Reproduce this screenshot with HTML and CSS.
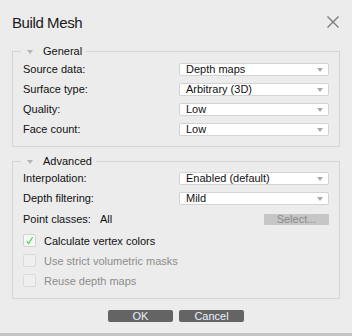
FILE: index.html
```html
<!DOCTYPE html>
<html lang="en">
<head>
    <meta charset="UTF-8">
    <title>Build Mesh</title>
    <link rel="stylesheet" href="styles.css">
</head>
<body>
<div class="dialog">
    <div class="header">
        <span class="title">Build Mesh</span>
        <svg class="close" width="12" height="12" viewBox="0 0 12 12">
            <path d="M0.5 0.5 L11.5 11.5 M11.5 0.5 L0.5 11.5" stroke="#7c7c7c" stroke-width="1.4" fill="none"/>
        </svg>
    </div>

    <fieldset class="group">
        <legend><span class="caret"></span>General</legend>
        <div class="row">
            <span class="label">Source data:</span>
            <div class="combo">Depth maps<span class="arrow"></span></div>
        </div>
        <div class="row">
            <span class="label">Surface type:</span>
            <div class="combo">Arbitrary (3D)<span class="arrow"></span></div>
        </div>
        <div class="row">
            <span class="label">Quality:</span>
            <div class="combo">Low<span class="arrow"></span></div>
        </div>
        <div class="row">
            <span class="label">Face count:</span>
            <div class="combo">Low<span class="arrow"></span></div>
        </div>
    </fieldset>

    <fieldset class="group advanced">
        <legend><span class="caret"></span>Advanced</legend>
        <div class="row">
            <span class="label">Interpolation:</span>
            <div class="combo">Enabled (default)<span class="arrow"></span></div>
        </div>
        <div class="row">
            <span class="label">Depth filtering:</span>
            <div class="combo">Mild<span class="arrow"></span></div>
        </div>
        <div class="row point-row">
            <span class="label">Point classes:<span class="value">All</span></span>
            <div class="select-btn">Select...</div>
        </div>
        <div class="row check-row">
            <span class="checkbox">
                <svg width="11" height="11" viewBox="0 0 11 11">
                    <path d="M2.8 6.2 L4.6 8.6 L8.6 2.2" stroke="#5bd46c" stroke-width="1.3" fill="none"/>
                </svg>
            </span>
            <span class="check-label">Calculate vertex colors</span>
        </div>
        <div class="row check-row disabled">
            <span class="checkbox"></span>
            <span class="check-label">Use strict volumetric masks</span>
        </div>
        <div class="row check-row disabled">
            <span class="checkbox"></span>
            <span class="check-label">Reuse depth maps</span>
        </div>
    </fieldset>

    <div class="buttons">
        <div class="btn">OK</div>
        <div class="btn">Cancel</div>
    </div>
</div>
</body>
</html>
```

FILE: styles.css
```css
html {
    background: linear-gradient(#8c8c8c, #c4c4c4);
    height: 100%;
}
body {
    margin: 0;
    font-family: "Liberation Sans", Arial, sans-serif;
    font-size: 11px;
    color: #111;
}
.dialog {
    height: 333px;
    box-sizing: border-box;
    background: #ececec;
    overflow: hidden;
}
.header {
    display: flex;
    justify-content: space-between;
    align-items: flex-start;
    padding: 14px 13px 0 12px;
}
.title {
    font-size: 15px;
    line-height: 18px;
    letter-spacing: -0.4px;
    color: #1a1a1a;
}
.close {
    margin-top: 2px;
}
.group {
    margin: 13px 12px 0;
    padding: 5px 10px 10px;
    border: 1px solid #d5d5d5;
    display: flex;
    flex-direction: column;
    gap: 7px;
}
.group.advanced {
    margin-top: 8px;
    padding-top: 4px;
    padding-bottom: 11px;
}
.group legend {
    margin-left: -2px;
    padding: 0 4px 0 6px;
    line-height: 13px;
    display: flex;
    align-items: center;
}
.caret {
    width: 0;
    height: 0;
    border-left: 3.5px solid transparent;
    border-right: 3.5px solid transparent;
    border-top: 4px solid #b4b4b4;
    margin-right: 10px;
}
.row {
    display: flex;
    align-items: center;
    justify-content: space-between;
    height: 13px;
}
.row.point-row {
    height: 15px;
}
.label {
    line-height: 13px;
}
.value {
    margin-left: 9px;
}
.combo {
    position: relative;
    width: 150px;
    height: 13px;
    box-sizing: border-box;
    border: 1px solid #d3d3d3;
    border-radius: 2px;
    background: #fff;
    padding-left: 6px;
    line-height: 11px;
}
.arrow {
    position: absolute;
    right: 5px;
    top: 4px;
    width: 0;
    height: 0;
    border-left: 3.5px solid transparent;
    border-right: 3.5px solid transparent;
    border-top: 4px solid #a9a9a9;
}
.select-btn {
    width: 65px;
    height: 11px;
    background: #c6c6c6;
    border-radius: 1px;
    color: #8a8a8a;
    text-align: center;
    line-height: 11px;
}
.check-row {
    justify-content: flex-start;
}
.checkbox {
    width: 13px;
    height: 13px;
    box-sizing: border-box;
    border: 1px solid #d2d2d2;
    border-radius: 2px;
    background: #f7f7f7;
    display: flex;
    align-items: center;
    justify-content: center;
    margin-right: 8px;
}
.disabled .checkbox {
    background: #efefef;
    border-color: #dadada;
}
.disabled .check-label {
    color: #8c8c8c;
}
.buttons {
    display: flex;
    justify-content: center;
    gap: 6px;
    margin-top: 11px;
}
.btn {
    width: 65px;
    height: 12px;
    background: #646464;
    border-radius: 2px;
    color: #e8f1ff;
    text-align: center;
    line-height: 12px;
}
```
